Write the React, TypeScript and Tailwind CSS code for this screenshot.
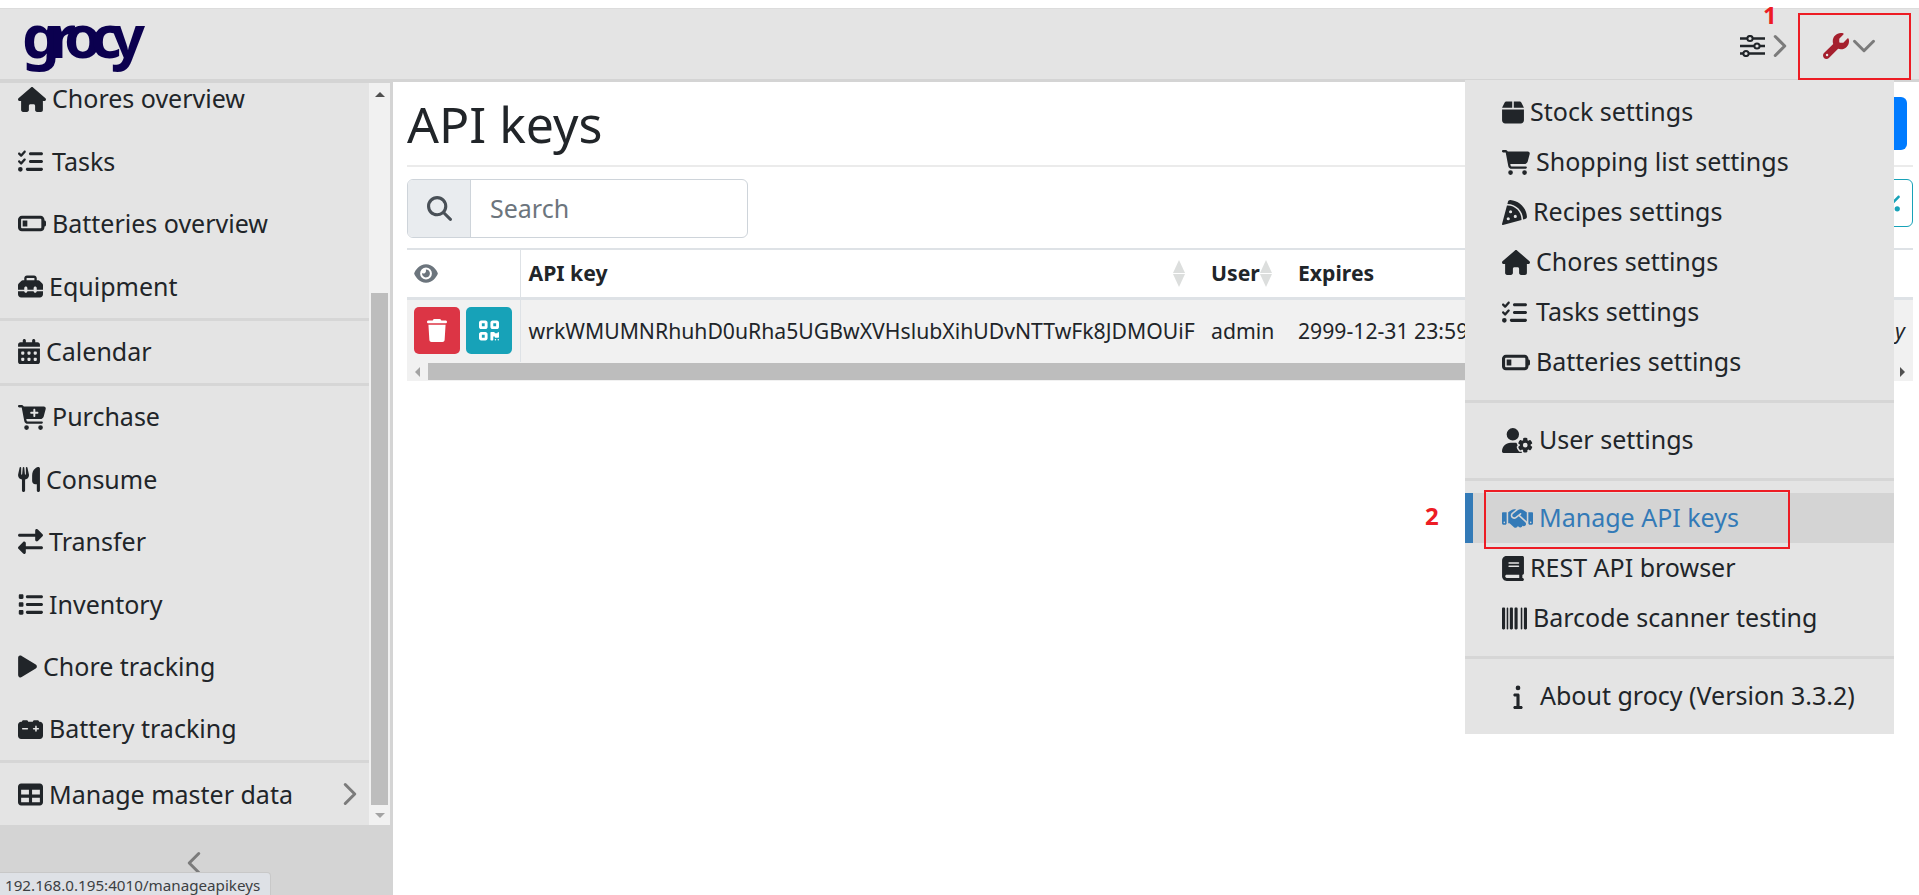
import type { ReactNode } from "react";
import { ChevronDown, ChevronLeft, ChevronRight } from "lucide-react";
import {
  FaBarcode,
  FaBatteryQuarter,
  FaBook,
  FaBox,
  FaCalendarDays,
  FaCarBattery,
  FaCartPlus,
  FaCartShopping,
  FaEye,
  FaHandshake,
  FaHouse,
  FaInfo,
  FaList,
  FaListCheck,
  FaMagnifyingGlass,
  FaPercent,
  FaPizzaSlice,
  FaPlay,
  FaQrcode,
  FaRightLeft,
  FaTable,
  FaToolbox,
  FaTrash,
  FaUserGear,
  FaUtensils,
  FaWrench,
} from "react-icons/fa6";

// font awesome glyph widths at 25px tall
const i19 = "h-[25px] w-[19px] shrink-0";
const i22 = "h-[25px] w-[22px] shrink-0";
const i25 = "h-[25px] w-[25px] shrink-0";
const i28 = "h-[25px] w-[28px] shrink-0";
const i31 = "h-[25px] w-[31px] shrink-0";

function SideItem({ glyph, label, end }: { glyph: ReactNode; label: string; end?: ReactNode }) {
  return (
    <div className="h-[62.4px] shrink-0 flex items-center pl-[18px] pr-0 gap-[6px] text-[25px] text-[#212529]">
      {glyph}
      <span>{label}</span>
      {end}
    </div>
  );
}

function SideDivider() {
  return <div className="h-[3px] shrink-0 bg-[#d6d6d6]" />;
}

function MenuItem({ glyph, label, active }: { glyph: ReactNode; label: string; active?: boolean }) {
  return (
    <div
      className={
        active
          ? "h-[50px] flex items-center gap-[6px] pl-[29px] border-l-8 border-[#337ab7] bg-[#d4d4d4] text-[#337ab7]"
          : "h-[50px] flex items-center gap-[6px] pl-[37px] text-[#212529]"
      }
    >
      {glyph}
      <span>{label}</span>
    </div>
  );
}

function MenuDivider() {
  return <div className="h-[3px] mt-[13px] mb-[12px] bg-[#d6d6d6]" />;
}

function SortArrows() {
  return (
    <span className="flex flex-col gap-[1px] shrink-0">
      <span className="w-0 h-0 border-x-[6.5px] border-x-transparent border-b-[13px] border-b-[#dcdedd]" />
      <span className="w-0 h-0 border-x-[6.5px] border-x-transparent border-t-[13px] border-t-[#dcdedd]" />
    </span>
  );
}

function SlidersIcon() {
  return (
    <svg viewBox="0 0 25 22" className="w-[25px] h-[22px] text-[#212529]" fill="none" stroke="currentColor">
      <path d="M0 3.5h25M0 11h25M0 18.5h25" strokeWidth="2.4" />
      <circle cx="10" cy="3.5" r="2.6" fill="#e4e4e4" strokeWidth="2" />
      <circle cx="17" cy="11" r="2.6" fill="#e4e4e4" strokeWidth="2" />
      <circle cx="6" cy="18.5" r="2.6" fill="#e4e4e4" strokeWidth="2" />
    </svg>
  );
}

export default function App() {
  return (
    <div className="relative h-[895px] w-[1919px] overflow-hidden bg-white font-['Noto_Sans',sans-serif]">
      <div className="h-2 bg-white" />

      <header className="h-[71px] bg-[#e4e4e4] border-t border-[#dcdcdc] flex items-center justify-between pl-[22px]">
        <div className="text-[60px] leading-[72px] font-bold tracking-[-0.18em] text-[#0b004f] -mt-[19px] pr-3">grocy</div>
        <div className="flex items-center mt-1">
          <SlidersIcon />
          <ChevronRight size={38} strokeWidth={1.9} className="text-[#7b7b7b] -ml-1 -mr-[1px]" />
          <div className="w-[121px] flex items-center pl-[25px]">
            <FaWrench className="h-[26px] w-[26px] text-[#a51f2d]" />
            <ChevronDown size={38} strokeWidth={1.9} className="text-[#7b7b7b] -ml-1" />
          </div>
        </div>
      </header>

      <div className="flex h-[816px]">
        <aside className="w-[393px] shrink-0 bg-[#d4d4d4] flex flex-col pr-[3px]">
          <div className="h-[4px] shrink-0" />
          <div className="h-[742px] shrink-0 flex">
            <nav className="flex-1 min-w-0 bg-[#e4e4e4] flex flex-col overflow-hidden">
              <div className="-mt-[15px]" />
              <SideItem glyph={<FaHouse className={i28} />} label="Chores overview" />
              <SideItem glyph={<FaListCheck className={`${i25} mr-[3px]`} />} label="Tasks" />
              <SideItem glyph={<FaBatteryQuarter className={i28} />} label="Batteries overview" />
              <SideItem glyph={<FaToolbox className={i25} />} label="Equipment" />
              <SideDivider />
              <SideItem glyph={<FaCalendarDays className={i22} />} label="Calendar" />
              <SideDivider />
              <SideItem glyph={<FaCartPlus className={i28} />} label="Purchase" />
              <SideItem glyph={<FaUtensils className={i22} />} label="Consume" />
              <SideItem glyph={<FaRightLeft className={i25} />} label="Transfer" />
              <SideItem glyph={<FaList className={i25} />} label="Inventory" />
              <SideItem glyph={<FaPlay className={i19} />} label="Chore tracking" />
              <SideItem glyph={<FaCarBattery className={i25} />} label="Battery tracking" />
              <SideDivider />
              <SideItem
                glyph={<FaTable className={i25} />}
                label="Manage master data"
                end={<ChevronRight size={38} strokeWidth={1.9} className="ml-auto text-[#7b7b7b]" />}
              />
            </nav>
            <div className="w-[21px] bg-[#f1f1f1] flex flex-col items-center">
              <div className="h-[21px] flex items-center justify-center shrink-0 mt-[1px]">
                <span className="w-0 h-0 border-x-[5px] border-x-transparent border-b-[5px] border-b-[#505050]" />
              </div>
              <div className="flex-1" />
              <div className="w-[17px] h-[512px] bg-[#bdbdbd]" />
              <div className="h-[20px] flex items-center justify-center shrink-0">
                <span className="w-0 h-0 border-x-[5px] border-x-transparent border-t-[5px] border-t-[#a3a3a3]" />
              </div>
            </div>
          </div>
          <div className="flex justify-center pt-[19px]">
            <ChevronLeft size={38} strokeWidth={1.9} className="text-[#7b7b7b] mr-[3px]" />
          </div>
        </aside>

        <main className="flex-1 pl-[14px] pr-[6px] border-t-[3px] border-[#d4d4d4]">
          <div className="h-[85px] border-b-2 border-[#ebebeb] flex items-center justify-between">
            <h1 className="text-[50px] leading-none text-[#212529]">API keys</h1>
            <div className="w-[120px] h-[53px] mr-[6px] rounded-[6px] bg-[#007bff]" />
          </div>
          <div className="h-[81px] flex items-start justify-between pt-3">
            <div className="flex w-[341px] h-[59px] border border-[#ced4da] rounded-[6px] overflow-hidden text-[25px]">
              <div className="w-[63px] shrink-0 bg-[#e9ecef] border-r border-[#ced4da] flex items-center justify-center">
                <FaMagnifyingGlass className="h-[25px] w-[25px] text-[#495057]" />
              </div>
              <div className="flex-1 pl-[19px] pt-[1px] flex items-center text-[#6c757d]">Search</div>
            </div>
            <div className="w-[120px] h-[48px] rounded-[6px] border border-[#17a2b8] flex items-center justify-end pr-[12px]">
              <FaPercent className="h-[21px] w-[16px] text-[#17a2b8]" />
            </div>
          </div>

          <div className="border-t-2 border-[#dee2e6] overflow-hidden">
            <table className="w-[1506px] table-fixed border-collapse text-[21.2px] text-[#212529]">
              <colgroup>
                <col className="w-[113px]" />
                <col className="w-[683px]" />
                <col className="w-[87px]" />
                <col />
              </colgroup>
              <thead>
                <tr className="h-[48px] border-b-[3px] border-[#dee2e6]">
                  <th className="border-r border-[#dee2e6] pl-[7px] text-left">
                    <FaEye className="h-[21px] w-[24px] text-[#6c757d]" />
                  </th>
                  <th className="pl-2 pr-[18px] font-bold text-left">
                    <div className="flex items-center justify-between">
                      API key
                      <SortArrows />
                    </div>
                  </th>
                  <th className="pl-2 pr-[19px] font-bold text-left">
                    <div className="flex items-center justify-between">
                      User
                      <SortArrows />
                    </div>
                  </th>
                  <th className="pl-2 font-bold text-left">Expires</th>
                </tr>
              </thead>
              <tbody>
                <tr className="h-[64px] bg-[#f1f1f1]">
                  <td className="border-r border-[#dee2e6] pl-[7px]">
                    <div className="flex gap-[6px]">
                      <div className="w-[46px] h-[47px] rounded-[5px] bg-[#dc3545] flex items-center justify-center">
                        <FaTrash className="h-[23px] w-[20px] text-white" />
                      </div>
                      <div className="w-[46px] h-[47px] rounded-[5px] bg-[#17a2b8] flex items-center justify-center">
                        <FaQrcode className="h-[23px] w-[20px] text-white" />
                      </div>
                    </div>
                  </td>
                  <td className="pl-2 whitespace-nowrap overflow-hidden">
                    wrkWMUMNRhuhD0uRha5UGBwXVHslubXihUDvNTTwFk8JDMOUiF
                  </td>
                  <td className="pl-2">admin</td>
                  <td className="pl-2 whitespace-nowrap">
                    <div className="flex justify-between pr-[8px]">
                      2999-12-31 23:59:59
                      <span className="italic">y</span>
                    </div>
                  </td>
                </tr>
              </tbody>
            </table>
            <div className="w-[1506px] h-[19px] bg-[#f1f1f1] flex items-center">
              <div className="w-[21px] flex justify-center shrink-0">
                <span className="w-0 h-0 border-y-[5px] border-y-transparent border-r-[5px] border-r-[#a3a3a3]" />
              </div>
              <div className="flex-1 h-[17px] bg-[#bdbdbd]" />
              <div className="w-[21px] flex justify-center shrink-0">
                <span className="w-0 h-0 border-y-[5px] border-y-transparent border-l-[5px] border-l-[#505050]" />
              </div>
            </div>
          </div>
        </main>
      </div>

      {/* settings dropdown */}
      <div className="absolute left-[1465px] top-[80px] w-[429px] h-[654px] bg-[#e4e4e4] pt-[7px] text-[25px]">
        <MenuItem glyph={<FaBox className={i22} />} label="Stock settings" />
        <MenuItem glyph={<FaCartShopping className={i28} />} label="Shopping list settings" />
        <MenuItem glyph={<FaPizzaSlice className={i25} />} label="Recipes settings" />
        <MenuItem glyph={<FaHouse className={i28} />} label="Chores settings" />
        <MenuItem glyph={<FaListCheck className={`${i25} mr-[3px]`} />} label="Tasks settings" />
        <MenuItem glyph={<FaBatteryQuarter className={i28} />} label="Batteries settings" />
        <MenuDivider />
        <MenuItem glyph={<FaUserGear className={i31} />} label="User settings" />
        <MenuDivider />
        <MenuItem active glyph={<FaHandshake className={i31} />} label="Manage API keys" />
        <MenuItem glyph={<FaBook className={i22} />} label="REST API browser" />
        <MenuItem glyph={<FaBarcode className={i25} />} label="Barcode scanner testing" />
        <MenuDivider />
        <div className="h-[50px] flex items-center pl-[48px] text-[#212529]">
          <FaInfo className="h-[25px] w-[10px]" />
          <span className="ml-[17px]">About grocy (Version 3.3.2)</span>
        </div>
      </div>

      {/* annotations */}
      <div className="absolute left-[1798px] top-[13px] w-[113px] h-[67px] border-2 border-[#ed1c24]" />
      <div className="absolute left-[1484px] top-[490px] w-[306px] h-[59px] border-2 border-[#ed1c24]" />
      <div className="absolute left-[1763px] top-0 text-[24px] leading-[30px] font-bold text-[#ed1c24]">1</div>
      <div className="absolute left-[1425px] top-[501px] text-[24px] leading-[30px] font-bold text-[#ed1c24]">2</div>

      {/* browser status bubble */}
      <div className="absolute left-0 top-[872px] w-[271px] h-[23px] bg-[#dee1e6] border-t border-r border-[#c8c8c8] rounded-tr-[4px] pl-[5px] text-[15.2px] leading-[24px] text-[#3c4043] overflow-hidden">
        192.168.0.195:4010/manageapikeys
      </div>
    </div>
  );
}
